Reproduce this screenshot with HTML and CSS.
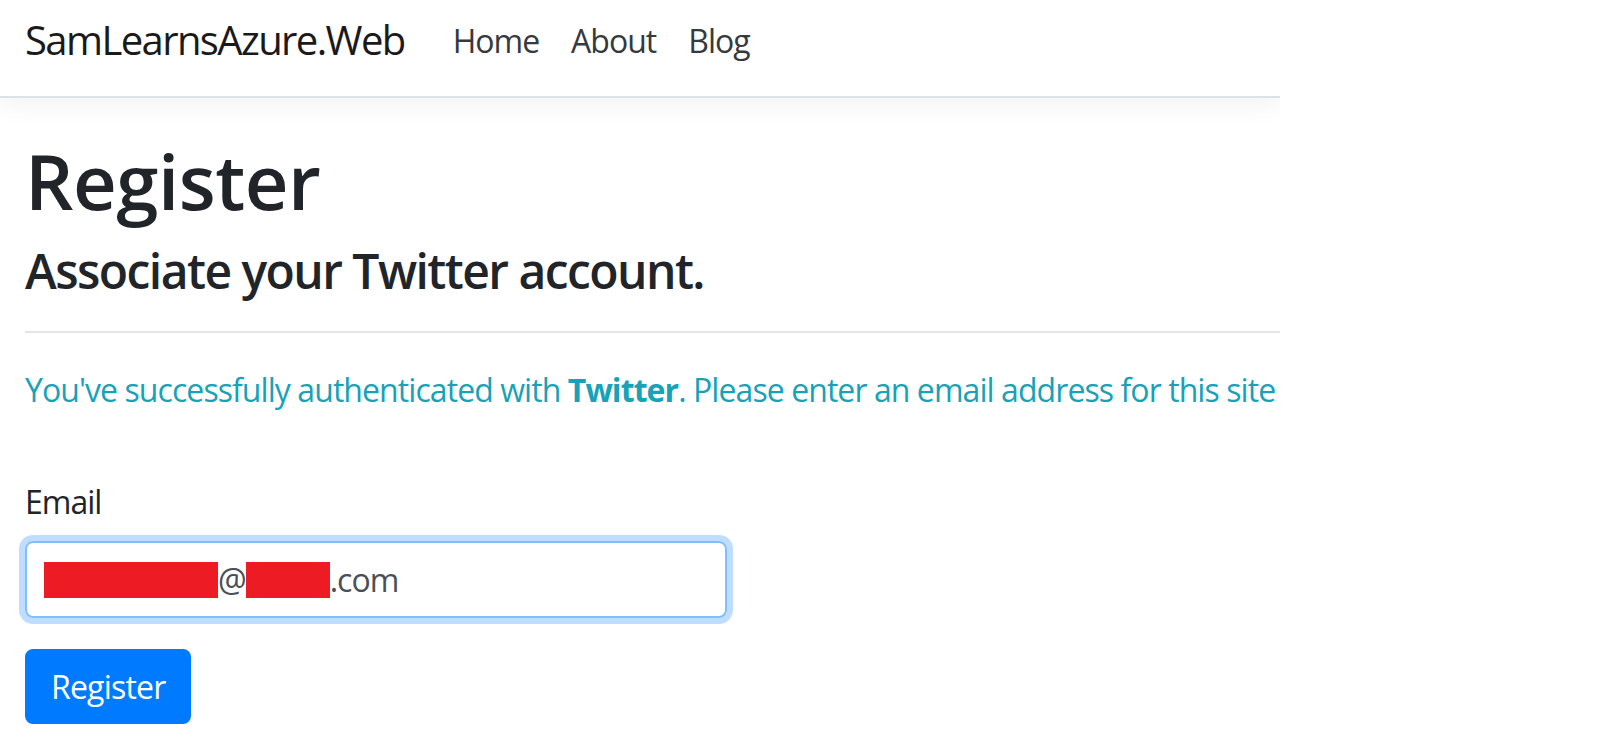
FILE: index.html
```html
<!DOCTYPE html>
<html lang="en">
<head>
<meta charset="utf-8">
<title>Register - SamLearnsAzure.Web</title>
<link rel="stylesheet" href="styles.css">
</head>
<body>
<div class="page">
  <header>
    <nav class="navbar">
      <a class="brand" href="#">SamLearnsAzure.Web</a>
      <ul class="nav">
        <li><a class="nav-link" href="#">Home</a></li>
        <li><a class="nav-link" href="#">About</a></li>
        <li><a class="nav-link" href="#">Blog</a></li>
      </ul>
    </nav>
  </header>
  <main class="container">
    <h1 class="title">Register</h1>
    <h4 class="subtitle">Associate your Twitter account.</h4>
    <hr class="rule">
    <p class="text-info">You've successfully authenticated with <strong>Twitter</strong>. Please enter an email address for this site</p>
    <form class="form">
      <label class="label" for="email">Email</label>
      <div class="form-control" id="email"><span class="redact redact-a"></span>@<span class="redact redact-b"></span>.com</div>
      <button type="button" class="btn">Register</button>
    </form>
  </main>
</div>
</body>
</html>
```
FILE: styles.css
```css
html, body {
  margin: 0;
  padding: 0;
  background: #fff;
}
body {
  font-family: "Open Sans", "Noto Sans", sans-serif;
  color: #212529;
}
.page {
  width: 1280px;
  min-height: 737px;
  overflow: hidden;
  background: #fff;
}
.navbar {
  height: 98px;
  box-sizing: border-box;
  padding: 0 25px;
  display: flex;
  align-items: flex-start;
  border-bottom: 2px solid #dee2e6;
  box-shadow: 0 8px 24px rgba(0, 0, 0, 0.05);
  background: #fff;
  position: relative;
}
.brand {
  font-size: 40px;
  line-height: 60px;
  padding-top: 10px;
  color: #1a1a1a;
  text-decoration: none;
  letter-spacing: -1.6px;
  margin-right: 32px;
}
.nav {
  list-style: none;
  margin: 0;
  padding: 17px 0 0;
  display: flex;
}
.nav-link {
  display: block;
  font-size: 32px;
  line-height: 48px;
  padding: 0 16px;
  color: #343a40;
  text-decoration: none;
  letter-spacing: -1px;
}
.container {
  padding: 0 0 0 25px;
}
.title {
  margin: 38px 0 0;
  font-size: 76px;
  line-height: 90px;
  font-weight: 600;
  letter-spacing: -0.5px;
}
.subtitle {
  margin: 16px 0 0;
  font-size: 48px;
  line-height: 58px;
  font-weight: 600;
  letter-spacing: -1.55px;
}
.rule {
  margin: 31px 0 0;
  border: 0;
  border-top: 2px solid rgba(0, 0, 0, 0.1);
}
.text-info {
  margin: 33px 0 0;
  font-size: 32px;
  line-height: 48px;
  color: #17a2b8;
  letter-spacing: -0.93px;
  white-space: nowrap;
}
.text-info strong {
  font-weight: 700;
}
.form {
  display: flex;
  flex-direction: column;
  align-items: flex-start;
  margin-top: 64px;
}
.label {
  font-size: 32px;
  line-height: 48px;
  letter-spacing: -1px;
}
.form-control {
  margin-top: 15px;
  width: 702px;
  height: 77px;
  box-sizing: border-box;
  padding: 12px 24px 12px 17px;
  border: 2px solid #80bdff;
  border-radius: 8px;
  box-shadow: 0 0 0 6px rgba(0, 123, 255, 0.25);
  font-size: 32px;
  line-height: 48px;
  color: #495057;
  letter-spacing: -1px;
  display: flex;
  align-items: center;
}
.redact {
  display: inline-block;
  height: 36px;
  background: #ed1c24;
}
.redact-a {
  width: 174px;
}
.redact-b {
  width: 84px;
}
.btn {
  margin-top: 31px;
  font-family: inherit;
  font-size: 32px;
  line-height: 48px;
  letter-spacing: -0.8px;
  padding: 12px 24px;
  height: 75px;
  border: 2px solid #007bff;
  border-radius: 8px;
  background: #007bff;
  color: #fff;
  cursor: pointer;
}
```
